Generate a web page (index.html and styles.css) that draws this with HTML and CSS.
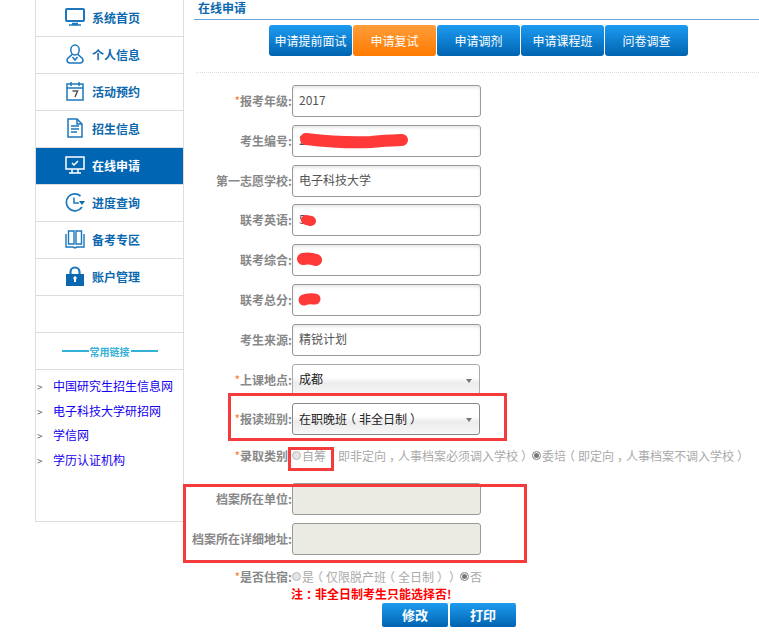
FILE: index.html
```html
<!DOCTYPE html>
<html lang="zh-CN">
<head>
<meta charset="utf-8">
<title>在线申请</title>
<link rel="stylesheet" href="styles.css">
</head>
<body>
<div class="page">
  <aside class="sidebar">
    <nav class="menu">
      <a class="menu-item"><svg class="icon" viewBox="0 0 20 20"><rect x="1" y="2" width="18" height="12" rx="1" fill="none" stroke-width="2"/><path d="M7 16.500h6M4 18h12" stroke-width="1.500"/></svg>系统首页</a>
      <a class="menu-item"><svg class="icon" viewBox="0 0 20 20"><ellipse cx="10" cy="6" rx="4.200" ry="5" fill="none" stroke-width="1.500"/><path d="M7 10c0 2-5 3-5 6 0 2 1 3 3 3h10c2 0 3-1 3-3 0-3-5-4-5-6M7.500 13l2.500 3 2.500-3" fill="none" stroke-width="1.500"/></svg>个人信息</a>
      <a class="menu-item"><svg class="icon" viewBox="0 0 20 20"><rect x="2" y="3" width="16" height="16" fill="none" stroke-width="1.500"/><path d="M2 7h16M6 1v4M14 1v4" stroke-width="1.500"/><path d="M7.500 10h5l-2.500 6" fill="none" stroke="#555" stroke-width="1.500"/></svg>活动预约</a>
      <a class="menu-item"><svg class="icon" viewBox="0 0 20 20"><path d="M3 1h9l5 5v13H3z" fill="none" stroke-width="1.500"/><path d="M12 1v5h5M6 8h8M6 11h8M6 14h6" fill="none" stroke-width="1.500"/></svg>招生信息</a>
      <a class="menu-item active"><svg class="icon" viewBox="0 0 20 20"><rect x="1" y="2" width="18" height="12" fill="none" stroke-width="1.500"/><path d="M7 8l2 2 4-4M7 14v4M13 14v4M4 18h12" fill="none" stroke-width="1.500"/></svg>在线申请</a>
      <a class="menu-item"><svg class="icon" viewBox="0 0 20 20"><path d="M17 15A8.500 8.500 0 1 1 15.500 4" fill="none" stroke-width="1.700"/><path d="M9 5.500V11h5" fill="none" stroke-width="1.500"/><path class="solid" d="M14 9h6l-3 4z"/></svg>进度查询</a>
      <a class="menu-item"><svg class="icon" viewBox="0 0 20 20"><path d="M3.500 2h5.500v13H3.500zM11 2h5.500v13H11z" fill="none" stroke-width="1.400"/><path d="M1 5v13h7l2 1 2-1h7V5" fill="none" stroke-width="1.400"/></svg>备考专区</a>
      <a class="menu-item"><svg class="icon" viewBox="0 0 20 20"><path d="M5.500 9V6a4.500 4.500 0 0 1 9 0v3" fill="none" stroke-width="2.200"/><rect class="solid" x="1" y="8" width="18" height="12"/><rect x="9" y="11" width="2" height="5" fill="#fff" stroke="none"/><circle cx="10" cy="12" r="1.700" fill="#fff" stroke="none"/></svg>账户管理</a>
    </nav>
    <div class="spacer"></div>
    <div class="links-title"><span class="rule"></span><span>常用链接</span><span class="rule"></span></div>
    <ul class="links">
      <li><a>中国研究生招生信息网</a></li>
      <li><a>电子科技大学研招网</a></li>
      <li><a>学信网</a></li>
      <li><a>学历认证机构</a></li>
    </ul>
  </aside>
  <main class="main">
    <h1 class="title">在线申请</h1>
    <div class="tabs">
      <a class="tab">申请提前面试</a>
      <a class="tab current">申请复试</a>
      <a class="tab">申请调剂</a>
      <a class="tab">申请课程班</a>
      <a class="tab">问卷调查</a>
    </div>
    <form class="form">
      <div class="row"><label class="label"><i>*</i>报考年级:</label><input class="field" value="2017"></div>
      <div class="row"><label class="label">考生编号:</label><input class="field" value="2017"></div>
      <div class="row"><label class="label">第一志愿学校:</label><input class="field" value="电子科技大学"></div>
      <div class="row"><label class="label">联考英语:</label><input class="field" value="5"></div>
      <div class="row"><label class="label">联考综合:</label><input class="field" value=""></div>
      <div class="row"><label class="label">联考总分:</label><input class="field" value=""></div>
      <div class="row"><label class="label">考生来源:</label><input class="field" value="精锐计划"></div>
      <div class="row"><label class="label"><i>*</i>上课地点:</label><div class="select muted"><span>成都</span></div></div>
      <div class="row"><label class="label"><i>*</i>报读班别:</label><div class="select"><span>在职晚班<b class="p">（</b>非全日制<b class="p">）</b></span></div></div>
      <div class="row radios type"><label class="label"><i>*</i>录取类别:</label><span class="radio"></span><span>自筹<b class="p">（</b>即非定向<b class="p">，</b>人事档案必须调入学校<b class="p">）</b></span><span class="radio on gap"></span><span>委培<b class="p">（</b>即定向<b class="p">，</b>人事档案不调入学校<b class="p">）</b></span></div>
      <div class="row archive"><label class="label">档案所在单位:</label><input class="field off" disabled></div>
      <div class="row"><label class="label">档案所在详细地址:</label><input class="field off" disabled></div>
      <div class="row radios stay"><label class="label"><i>*</i>是否住宿:</label><span class="radio"></span><span>是<b class="p">（</b>仅限脱产班<b class="p">（</b>全日制<b class="p">）</b><b class="p">）</b></span><span class="radio on gap"></span><span>否</span></div>
      <p class="note">注<b class="p">：</b>非全日制考生只能选择否!</p>
      <div class="actions"><a class="btn">修改</a><a class="btn">打印</a></div>
    </form>
  </main>
</div>
<svg class="ink" viewBox="0 0 759 641">
  <path d="M306 138c25 3 45 4 65 3 12-1 22-2 31-2" fill="none" stroke-width="12" transform="translate(0 1)"/>
  <path d="M306 220c2 0 4 1 5 1" fill="none" stroke-width="10"/>
  <path d="M303 259c5-1 10 0 13 1" fill="none" stroke-width="12"/>
  <path d="M304 300c4-2 9-1 11-1" fill="none" stroke-width="11"/>
</svg>
<div class="mark m1"></div>
<div class="mark m2"></div>
<div class="mark m3"></div>
</body>
</html>
```
FILE: styles.css
```css
* { box-sizing: border-box; }
html, body { margin: 0; height: 641px; overflow: hidden; background: #fff; }
body { font: 12px "Noto Sans CJK SC", "Liberation Sans", sans-serif; position: relative; }
.page { display: flex; align-items: flex-start; padding-left: 35px; }

.sidebar { width: 149px; height: 522px; border: 1px solid #ddd; border-top: 0; display: flex; flex-direction: column; flex: none; }
.menu-item { height: 37px; border-bottom: 1px solid #ddd; display: flex; align-items: center; gap: 7px; padding: 0 0 2px 29px; color: #0b68ae; font-weight: 700; }
.menu-item.active { background: #0066b3; color: #fff; }
.icon { width: 20px; height: 20px; stroke: #1b78bd; flex: none; }
.active .icon { stroke: #fff; }
.solid { fill: #0b68ae; stroke: none; }
.spacer { height: 37px; border-bottom: 1px solid #ddd; flex: none; }
.links-title { height: 37px; border-bottom: 1px solid #ddd; display: flex; align-items: center; justify-content: center; gap: 1px; color: #35b0d8; font-weight: 700; font-size: 10px; flex: none; }
.rule { width: 27px; height: 2px; background: #35b0d8; }
.links { list-style: none; margin: 4px 0 0; padding: 0; }
.links li { height: 24.600px; line-height: 24.600px; padding-left: 17px; position: relative; }
.links li::before { content: ">"; position: absolute; left: 1px; top: 1px; color: #666; font-size: 10px; }
.links a { color: #1500f0; }

.main { width: 565px; margin-left: 10px; flex: none; }
.title { margin: 0; height: 20px; line-height: 15px; padding-left: 4px; font-size: 12px; font-weight: 700; color: #0b68ae; border-bottom: 1px solid #6aa5d8; }
.tabs { display: flex; gap: 1px; margin: 5px 0 0 75px; padding: 0; }
.tab { width: 83px; height: 31px; border-radius: 3px; display: flex; align-items: center; justify-content: center; color: #fff; font-size: 12px; background: linear-gradient(#1d9bf0, #0064b0); }
.tab.current { background: linear-gradient(#ff9d3a, #ff7a00); }
.form { margin: 16px 0 0 2px; padding-top: 12px; border-top: 1px dotted #ddd; }

.row { display: flex; align-items: center; height: 32px; margin-bottom: 7.800px; }
.label { width: 96px; flex: none; display: flex; justify-content: flex-end; padding-bottom: 1px; color: #888; font-weight: 700; white-space: nowrap; }
.label i { color: #ff7a2a; font-style: normal; font-weight: 400; }
.field { width: 189px; height: 32px; border: 1px solid #999; border-radius: 3px; padding: 0 6px 3px; font: inherit; color: #555; background: #fff; box-shadow: inset 0 2px 3px #e8e8e8; outline: 0; }
.field.off { background: #ebebe4; box-shadow: none; }
.select { width: 188px; height: 32px; border: 1px solid #888; border-radius: 3px; padding: 0 6px 2px; display: flex; align-items: center; position: relative; color: #222; background: linear-gradient(#fff, #fff 40%, #ececec 60%, #f7f7f7); }
.select.muted { border-color: #aaa; }
.select::after { content: ""; position: absolute; right: 7px; top: 14px; border: 3px solid transparent; border-top: 4px solid #777; }
.p { display: inline-block; width: 12px; text-align: center; font-weight: inherit; font-feature-settings: "halt"; }

.radios { color: #aaa; white-space: nowrap; height: 20px; margin-bottom: 0; }
.radios.type { margin-top: 10.600px; }
.radio { width: 9px; height: 9px; border-radius: 50%; border: 1px solid #bbb; background: #e4e4e4; flex: none; margin-right: 1px; }
.radio.on { background: #777; box-shadow: inset 0 0 0 1px #fff; border-color: #999; }
.radio.gap { margin-left: 2px; }
.archive { margin-top: 17px; }
.stay { margin-top: 12px; height: 20px; margin-bottom: 0; }
.note { margin: -1px 0 0 95px; height: 15px; line-height: 15px; color: #f00; font-weight: 700; }
.actions { display: flex; gap: 2px; margin: 2px 0 0 186px; }
.btn { width: 66px; height: 24px; border-radius: 2px; display: flex; align-items: center; justify-content: center; color: #fff; font-weight: 700; font-size: 13px; background: linear-gradient(#1d9bf0, #0064b0); }

.ink { position: absolute; left: 0; top: 0; width: 759px; height: 641px; stroke: #ff3838; stroke-linecap: round; pointer-events: none; }
.mark { position: absolute; border: 3px solid #f53c3c; pointer-events: none; }
.m1 { left: 228px; top: 393px; width: 279px; height: 48px; }
.m2 { left: 288px; top: 447px; width: 46px; height: 24px; }
.m3 { left: 183px; top: 484px; width: 344px; height: 79px; }
```
